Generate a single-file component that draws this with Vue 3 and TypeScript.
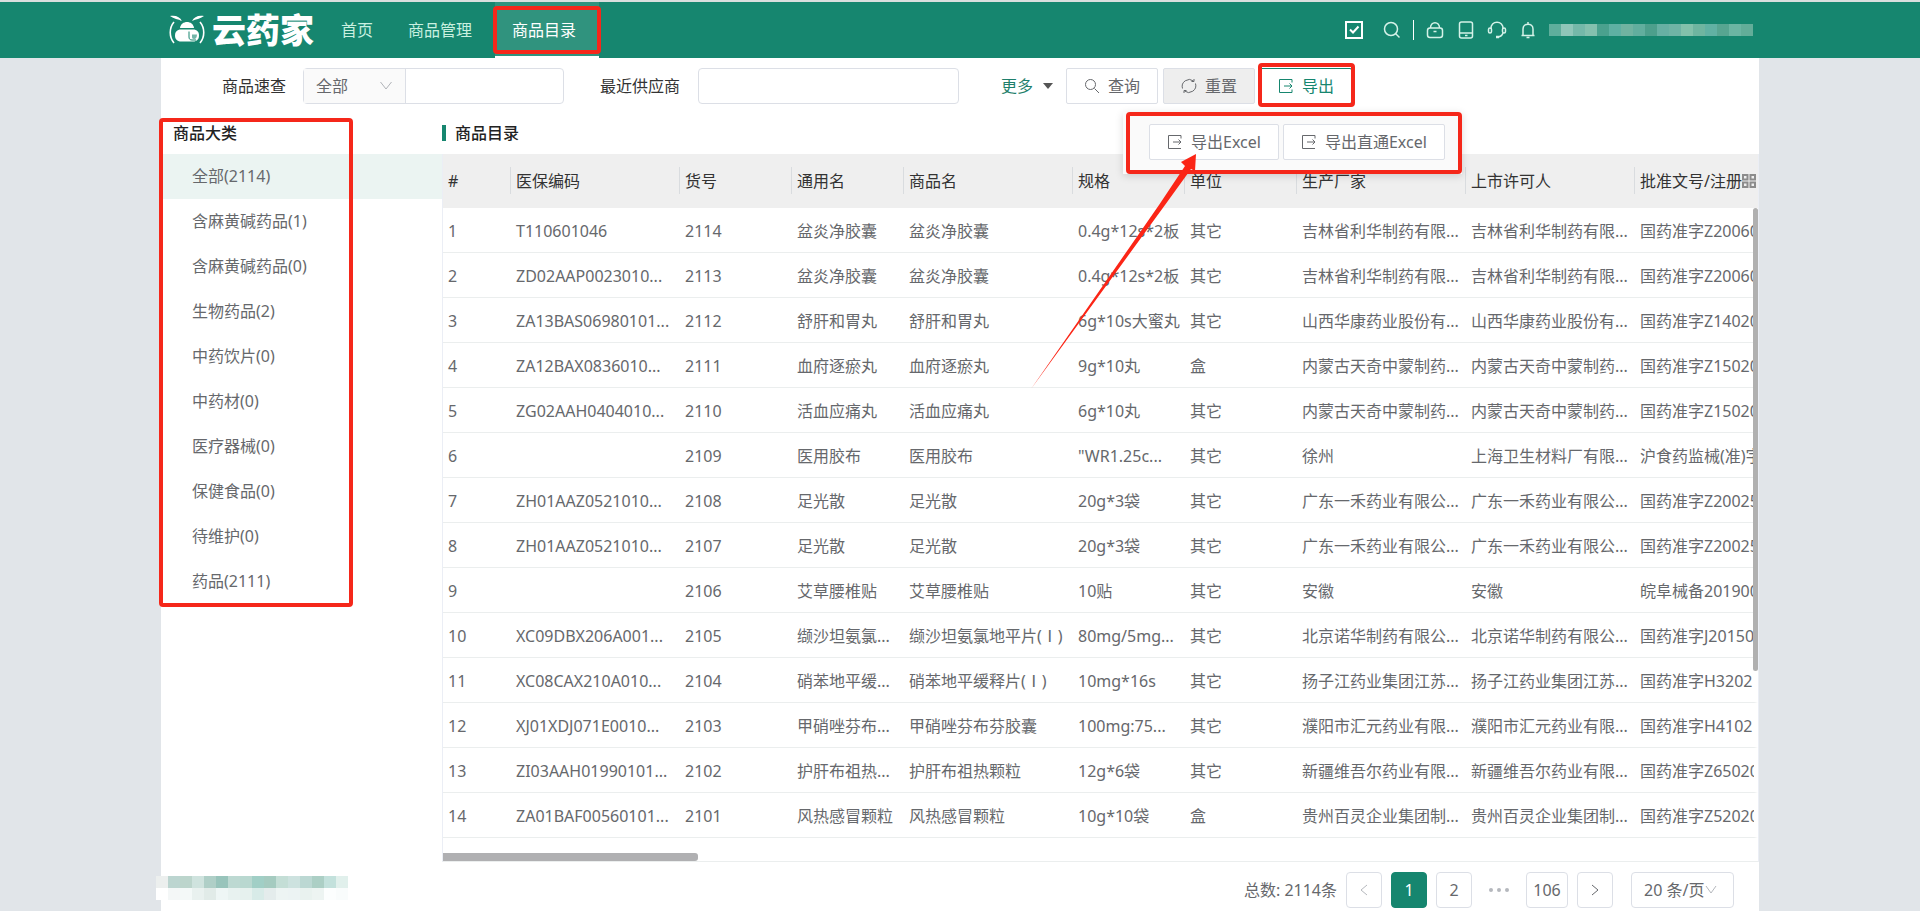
<script setup lang="ts">
import { ref } from 'vue'

interface Row {
  code: string
  no: string
  generic: string
  name: string
  spec: string
  unit: string
  maker: string
  holder: string
  approval: string
}

const r = (
  code: string, no: string, generic: string, name: string, spec: string,
  unit: string, maker: string, holder: string, approval: string
): Row => ({ code, no, generic, name, spec, unit, maker, holder, approval })

const rows: Row[] = [
  r('T110601046', '2114', '盆炎净胶囊', '盆炎净胶囊', '0.4g*12s*2板', '其它', '吉林省利华制药有限...', '吉林省利华制药有限...', '国药准字Z20060'),
  r('ZD02AAP0023010...', '2113', '盆炎净胶囊', '盆炎净胶囊', '0.4g*12s*2板', '其它', '吉林省利华制药有限...', '吉林省利华制药有限...', '国药准字Z20060'),
  r('ZA13BAS06980101...', '2112', '舒肝和胃丸', '舒肝和胃丸', '6g*10s大蜜丸', '其它', '山西华康药业股份有...', '山西华康药业股份有...', '国药准字Z14020'),
  r('ZA12BAX0836010...', '2111', '血府逐瘀丸', '血府逐瘀丸', '9g*10丸', '盒', '内蒙古天奇中蒙制药...', '内蒙古天奇中蒙制药...', '国药准字Z15020'),
  r('ZG02AAH0404010...', '2110', '活血应痛丸', '活血应痛丸', '6g*10丸', '其它', '内蒙古天奇中蒙制药...', '内蒙古天奇中蒙制药...', '国药准字Z15020'),
  r('', '2109', '医用胶布', '医用胶布', '"WR1.25c...', '其它', '徐州', '上海卫生材料厂有限...', '沪食药监械(准)字'),
  r('ZH01AAZ0521010...', '2108', '足光散', '足光散', '20g*3袋', '其它', '广东一禾药业有限公...', '广东一禾药业有限公...', '国药准字Z20025'),
  r('ZH01AAZ0521010...', '2107', '足光散', '足光散', '20g*3袋', '其它', '广东一禾药业有限公...', '广东一禾药业有限公...', '国药准字Z20025'),
  r('', '2106', '艾草腰椎贴', '艾草腰椎贴', '10贴', '其它', '安徽', '安徽', '皖阜械备201900'),
  r('XC09DBX206A001...', '2105', '缬沙坦氨氯...', '缬沙坦氨氯地平片(Ⅰ)', '80mg/5mg...', '其它', '北京诺华制药有限公...', '北京诺华制药有限公...', '国药准字J20150'),
  r('XC08CAX210A010...', '2104', '硝苯地平缓...', '硝苯地平缓释片(Ⅰ)', '10mg*16s', '其它', '扬子江药业集团江苏...', '扬子江药业集团江苏...', '国药准字H3202'),
  r('XJ01XDJ071E0010...', '2103', '甲硝唑芬布...', '甲硝唑芬布芬胶囊', '100mg:75...', '其它', '濮阳市汇元药业有限...', '濮阳市汇元药业有限...', '国药准字H4102'),
  r('ZI03AAH01990101...', '2102', '护肝布祖热...', '护肝布祖热颗粒', '12g*6袋', '其它', '新疆维吾尔药业有限...', '新疆维吾尔药业有限...', '国药准字Z65020'),
  r('ZA01BAF00560101...', '2101', '风热感冒颗粒', '风热感冒颗粒', '10g*10袋', '盒', '贵州百灵企业集团制...', '贵州百灵企业集团制...', '国药准字Z52020'),
]

const categories: string[] = [
  '全部(2114)', '含麻黄碱药品(1)', '含麻黄碱药品(0)', '生物药品(2)', '中药饮片(0)',
  '中药材(0)', '医疗器械(0)', '保健食品(0)', '待维护(0)', '药品(2111)',
]
const activeCategory = ref(0)
const keyword = ref('')
const supplier = ref('')

const userTiles: string[] = [
  '#5fae9c', '#8fc6b9', '#74b8a9', '#84c0ae', '#4aa18e', '#5fb0a3', '#70b3a1', '#62ae9e',
  '#4d9f8c', '#67b0a3', '#6fb4a5', '#83c1ab', '#6fb5a0', '#61b1a3', '#57a591', '#6cb5a3', '#63ad99',
]
const footTop: string[] = [
  '#ecefee', '#bcd5d0', '#bcd5cc', '#cfe3de', '#afcfc7', '#98c4bb', '#bdd9d2', '#b9d8d0',
  '#a1cfc6', '#a5cbc0', '#c4ded6', '#cde2df', '#bcd8d3', '#accfc5', '#c3e1dc', '#e1f0ec',
]
const footBottom: string[] = [
  '#ffffff', '#f4f7f7', '#f4f9f8', '#e9f1ef', '#e1ebe8', '#eef6f5', '#e8f2f0', '#e6f1ee',
  '#d8ebe8', '#e4ecec', '#edf4f3', '#ecf3f3', '#e9f2ef', '#edf4f2', '#fcfefe', '#f9fcfc',
]
</script>

<template>
  <div class="app">
    <header class="topbar">
      <div class="inner">
        <a class="brand" href="#" aria-label="云药家">
          <svg class="mark" width="36" height="30" viewBox="0 0 36 30" fill="none">
            <path d="M1 1C7 0 11 2 13 6C9 4 5 4 1 1ZM35 1C29 0 25 2 23 6C27 4 31 4 35 1Z" fill="#fff" />
            <path d="M5 7C0 13 0 22 5 28M31 7C36 13 36 22 31 28" stroke="#fff" stroke-width="1.600" />
            <path d="M11 13C12 5 24 5 25 13Z" fill="#fff" />
            <path d="M12 14.500H24C28 14.500 30 17 30 20.500C30 24 28 26.500 24 26.500H12C8 26.500 6 24 6 20.500C6 17 8 14.500 12 14.500Z" fill="#fff" />
            <path d="M20 16.500V22C20 24 21 25 23 25H27" stroke="#16866f" stroke-width="1" />
            <path d="M23 19.500H28C28 22 27 24 25 24C23.500 24 23 23 23 22Z" fill="#16866f" opacity=".6" />
          </svg>
          <span class="word">云药家</span>
        </a>
        <nav class="nav">
          <a href="#">首页</a>
          <a href="#">商品管理</a>
          <a href="#" class="active">商品目录<i class="frame"></i></a>
        </nav>
        <div class="tools">
          <button aria-label="待办"><svg width="20" height="20" viewBox="0 0 20 20"><path d="M2 2H18V18H2Z" stroke-width="2" /><path d="M6 9.500L9 12.500L14.500 6.500" stroke-width="2" /></svg></button>
          <button aria-label="搜索"><svg width="20" height="20" viewBox="0 0 20 20"><circle cx="9" cy="9" r="6.500" /><path d="M13.500 13.500L17.500 17.500" /></svg></button>
          <i class="bar"></i>
          <button aria-label="锁定"><svg width="20" height="20" viewBox="0 0 20 20"><rect x="2.500" y="8" width="15" height="9.500" rx="2.500" /><path d="M5.500 8C5.500 1 14.500 1 14.500 8M8.500 11.500H11.500" /></svg></button>
          <button aria-label="手机"><svg width="20" height="20" viewBox="0 0 20 20"><rect x="3.500" y="2" width="13" height="16" rx="2" /><path d="M3.500 13H16.500M9 15.500H11.500" /></svg></button>
          <button aria-label="客服"><svg width="20" height="20" viewBox="0 0 20 20"><path d="M4 9C3 0 17 0 16 9M16 13C15 16 13 17 10 17" /><rect x="1.500" y="8" width="3" height="5" rx="1.500" /><rect x="15.500" y="8" width="3" height="5" rx="1.500" /><path d="M9 17H12" stroke-width="2.500" /></svg></button>
          <button aria-label="通知"><svg width="20" height="20" viewBox="0 0 20 20"><path d="M3.500 15.500H16.500M5 15.500V9C5 2.500 15 2.500 15 9V15.500M10 2V4M8.500 17.500H11.500" /></svg></button>
          <div class="user"><i v-for="(c, i) in userTiles" :key="i" :style="{ background: c }"></i></div>
        </div>
      </div>
    </header>

    <main class="page">
      <form class="filters" @submit.prevent>
        <label class="lab first" for="quick">商品速查</label>
        <div class="combo">
          <div class="pick">
            <select aria-label="速查范围"><option>全部</option></select>
            <svg width="14" height="10" viewBox="0 0 14 10"><path d="M1.500 1L7 8L12.500 1" /></svg>
          </div>
          <input id="quick" v-model="keyword" type="text">
        </div>
        <label class="lab second" for="supplier">最近供应商</label>
        <input id="supplier" v-model="supplier" class="box" type="text">
        <button type="button" class="more">更多<svg width="10" height="6" viewBox="0 0 10 6"><path d="M0 0H10L5 6Z" fill="#555" /></svg></button>
        <button type="submit" class="btn"><svg width="16" height="16" viewBox="0 0 16 16"><circle cx="6.500" cy="6.500" r="5" /><path d="M10.500 10.500L15 15" /></svg>查询</button>
        <button type="reset" class="btn gray"><svg width="16" height="16" viewBox="0 0 16 16"><path d="M1.500 10.500A7 7 0 0 1 12.500 3M14.500 5.500A7 7 0 0 1 3.500 13M10.500 3.500H13V1M5.500 12.500H3V15" /></svg>重置</button>
        <div class="export">
          <button type="button" class="btn green"><svg width="16" height="16" viewBox="0 0 16 16"><path d="M14 4.500V1.500H1.500V14.500H14V11.500M6 8H14M11.500 5.500L14 8L11.500 10.500" /></svg>导出</button>
          <i class="frame"></i>
          <div class="popup">
            <button type="button" class="btn"><svg width="16" height="16" viewBox="0 0 16 16"><path d="M14 4.500V1.500H1.500V14.500H14M6 8H14M11.500 5.500L14 8L11.500 10.500" /></svg>导出Excel</button>
            <button type="button" class="btn"><svg width="16" height="16" viewBox="0 0 16 16"><path d="M14 4.500V1.500H1.500V14.500H14M6 8H14M11.500 5.500L14 8L11.500 10.500" /></svg>导出直通Excel</button>
            <i class="frame"></i>
            <svg class="arrow" width="166" height="236" viewBox="0 0 166 236"><path d="M0 235L128 51L154 12L150 8L165 0L164 17L160 15L134 51Z" fill="#fb2516" /></svg>
          </div>
        </div>
      </form>

      <div class="body">
        <aside class="side">
          <h2>商品大类</h2>
          <ul>
            <li v-for="(c, i) in categories" :key="i" :class="{ on: i === activeCategory }">
              <a href="#" @click.prevent="activeCategory = i">{{ c }}</a>
            </li>
          </ul>
          <i class="frame"></i>
          <div class="mosaic">
            <i v-for="(c, i) in [...footTop, ...footBottom]" :key="i" :style="{ background: c }"></i>
          </div>
        </aside>

        <section class="content">
          <h2>商品目录</h2>
          <div class="grid">
            <table>
              <colgroup>
                <col class="w-no"><col class="w-l"><col class="w-s"><col class="w-s"><col class="w-l">
                <col class="w-s"><col class="w-s"><col class="w-l"><col class="w-l"><col>
              </colgroup>
              <thead>
                <tr>
                  <th>#</th><th>医保编码</th><th>货号</th><th>通用名</th><th>商品名</th>
                  <th>规格</th><th>单位</th><th>生产厂家</th><th>上市许可人</th>
                  <th class="last">
                    <span>批准文号/注册</span>
                    <button aria-label="列设置"><svg width="14" height="14" viewBox="0 0 14 14"><path d="M1 1H5.500V5.500H1ZM8.500 1H13V5.500H8.500ZM1 8.500H5.500V13H1ZM8.500 8.500H13V13H8.500Z" /></svg></button>
                  </th>
                </tr>
              </thead>
              <tbody>
                <tr v-for="(row, i) in rows" :key="row.no">
                  <td>{{ i + 1 }}</td><td>{{ row.code }}</td><td>{{ row.no }}</td>
                  <td>{{ row.generic }}</td><td>{{ row.name }}</td><td>{{ row.spec }}</td>
                  <td>{{ row.unit }}</td><td>{{ row.maker }}</td><td>{{ row.holder }}</td>
                  <td>{{ row.approval }}</td>
                </tr>
              </tbody>
            </table>
            <i class="vbar"></i>
            <div class="track"><i class="hbar"></i></div>
          </div>
          <div class="pager">
            <span>总数: 2114条</span>
            <button class="pg" disabled aria-label="上一页"><svg width="8" height="12" viewBox="0 0 8 12"><path d="M7 1L1 6L7 11" /></svg></button>
            <button class="pg cur">1</button>
            <button class="pg">2</button>
            <span class="dots"><i></i><i></i><i></i></span>
            <button class="pg wide">106</button>
            <button class="pg" aria-label="下一页"><svg width="8" height="12" viewBox="0 0 8 12"><path d="M1 1L7 6L1 11" /></svg></button>
            <div class="size">
              <select aria-label="每页条数"><option>20 条/页</option></select>
              <svg width="12" height="10" viewBox="0 0 12 10"><path d="M1 1L6 8L11 1" /></svg>
            </div>
          </div>
        </section>
      </div>
    </main>
  </div>
</template>

<style>
body {
  margin: 0;
  background: #e1e5e9;
}
</style>

<style scoped>
.app {
  display: flex;
  flex-direction: column;
  min-height: 100vh;
  overflow-x: hidden;
  font: 16px/24px "Noto Sans", "Noto Sans CJK SC", sans-serif;
  color: #66686c;
}
.app * { box-sizing: border-box; }
button, input, select {
  margin: 0;
  padding: 0;
  border: 0;
  font: inherit;
  color: inherit;
  background: none;
}
select { appearance: none; }
a { color: inherit; text-decoration: none; }
svg { flex: none; fill: none; stroke: currentColor; }
h2 {
  margin: 0;
  font-size: 16px;
  line-height: 24px;
  font-weight: 500;
  color: #222;
}
.frame {
  position: absolute;
  border: 4px solid #f5271a;
  border-radius: 4px;
  pointer-events: none;
}

.topbar {
  border-top: 2px solid #d9dfde;
  background: #16866f;
  color: #c9f0e0;
}
.inner {
  display: flex;
  width: 100%;
  max-width: 1598px;
  height: 56px;
  margin: 0 auto;
}
.brand {
  display: flex;
  align-items: center;
  gap: 7px;
  width: 163px;
  padding-left: 8px;
  color: #fff;
}
.mark { stroke: none; }
.word {
  font-size: 34px;
  line-height: 50px;
  font-weight: 900;
}
.nav { display: flex; }
.nav a {
  position: relative;
  padding: 16px 18px 0 17px;
}
.nav .active {
  margin-left: 5px;
  padding-right: 23px;
  border-bottom: 2px solid #fff;
  background: #30937e;
  color: #fff;
}
.nav .frame { inset: 4px -2px 2px; }
.tools {
  display: flex;
  align-items: center;
  gap: 11px;
  margin-left: auto;
  padding-right: 6px;
}
.tools button { display: flex; color: #d5f2e8; }
.tools svg { stroke-width: 1.5; }
.tools button:first-child { margin-right: 7px; color: #fff; }
.bar { width: 1px; height: 20px; background: #fff; }
.user {
  display: flex;
  height: 12px;
}
.user i { width: 12px; height: 12px; }

.page {
  display: flex;
  flex: 1;
  flex-direction: column;
  width: 100%;
  max-width: 1598px;
  margin: 0 auto;
  background: #fff;
}
.filters {
  display: flex;
  align-items: center;
  height: 56px;
}
.lab { color: #333; white-space: nowrap; }
.first { margin: 0 17px 0 61px; }
.second { margin: 0 18px 0 36px; }
.combo {
  display: flex;
  width: 261px;
  height: 36px;
  border: 1px solid #dcdfe6;
  border-radius: 4px;
}
.combo input { flex: 1; min-width: 0; }
.pick {
  display: flex;
  align-items: center;
  width: 102px;
  padding: 0 12px;
  border-right: 1px solid #dcdfe6;
  background: #fafafa;
}
.pick select { flex: 1; }
.pick svg { stroke: #b0b3b8; }
.box {
  width: 261px;
  height: 36px;
  border: 1px solid #dcdfe6;
  border-radius: 4px;
}
.more {
  display: flex;
  align-items: center;
  gap: 10px;
  margin: 0 13px 0 42px;
  color: #1f7f6c;
}
.more svg { stroke: none; }
.btn {
  display: flex;
  align-items: center;
  gap: 8px;
  height: 36px;
  padding: 0 17px;
  border: 1px solid #dcdfe6;
  border-radius: 2px;
  background: #fff;
  white-space: nowrap;
}
.btn.gray { margin-left: 5px; background: #eee; }
.btn.green { color: #16866f; border-color: #16866f; }
.export { position: relative; margin-left: 5px; }
.export > .frame { inset: -5px -3px -3px -2px; }
.popup {
  position: absolute;
  z-index: 5;
  top: 44px;
  left: -137px;
  display: flex;
  gap: 4px;
  padding: 12px 17px 14px 26px;
  background: #fafafa;
  box-shadow: 0 2px 8px rgba(0, 0, 0, .15);
}
.popup > .frame { inset: 0 0 0 3px; }
.arrow {
  position: absolute;
  top: 42px;
  left: -93px;
  left: -92px;
  stroke: none;
}

.body { display: flex; flex: 1; }
.side {
  position: relative;
  width: 281px;
  padding-top: 7px;
}
.side h2 {
  padding-left: 12px;
  margin-bottom: 9px;
}
.side ul { margin: 0; padding: 0; list-style: none; }
.side li a {
  display: block;
  height: 45px;
  padding: 10px 31px;
}
.side .on { background: #ebf4f2; }
.side > .frame { top: 4px; left: -2px; width: 194px; height: 489px; }
.mosaic {
  position: absolute;
  top: 762px;
  left: -5px;
  display: grid;
  grid-template-columns: repeat(16, 12px);
}
.mosaic i { height: 12px; }

.content { flex: 1; min-width: 0; padding-top: 7px; }
.content h2 {
  display: flex;
  align-items: center;
  gap: 9px;
  margin-bottom: 9px;
}
.content h2::before {
  width: 4px;
  height: 16px;
  background: #16866f;
  content: "";
}
.grid {
  position: relative;
  border-left: 1px solid #ebeef5;
  border-right: 1px solid #ebeef5;
  border-bottom: 1px solid #ebeeee;
}
table {
  width: 100%;
  table-layout: fixed;
  border-spacing: 0;
}
.w-no { width: 67px; }
.w-l { width: 169px; }
.w-s { width: 112px; }
th {
  position: relative;
  height: 54px;
  padding: 0 0 0 6px;
  overflow: hidden;
  background: #efefef;
  color: #333;
  font-weight: 400;
  text-align: left;
  white-space: nowrap;
}
th + th::before {
  position: absolute;
  top: 13px;
  left: 0;
  width: 1px;
  height: 27px;
  background: #d9dcdf;
  content: "";
}
.last button {
  position: absolute;
  top: 20px;
  right: 2px;
  display: flex;
  color: #8c8c8c;
  background: #efefef;
}
.last svg { stroke-width: 2; }
td {
  height: 45px;
  padding: 2px 0 0 6px;
  border-bottom: 1px solid #ebeeee;
  overflow: hidden;
  white-space: nowrap;
}
th:first-child, td:first-child { padding-left: 5px; }
td:last-child { border-right: 4px solid #fff; }
.vbar {
  position: absolute;
  top: 54px;
  right: 0;
  width: 5px;
  height: 463px;
  border-radius: 3px;
  background: #b0b0b0;
}
.track { padding-top: 15px; }
.hbar {
  display: block;
  width: 255px;
  height: 8px;
  border-radius: 0 3px 3px 0;
  background: #b0b0b2;
}
.pager {
  display: flex;
  align-items: center;
  justify-content: flex-end;
  gap: 9px;
  padding: 10px 25px 3px 0;
}
.pg {
  display: flex;
  align-items: center;
  justify-content: center;
  width: 36px;
  height: 36px;
  border: 1px solid #dcdfe6;
  border-radius: 4px;
}
.pg:disabled { color: #b5b8bd; }
.pg.cur { border-color: #16866f; background: #16866f; color: #fff; }
.pg.wide { width: 42px; }
.dots { display: flex; justify-content: center; gap: 4px; width: 36px; }
.dots i { width: 4px; height: 4px; border-radius: 2px; background: #b5b8bd; }
.size {
  display: flex;
  align-items: center;
  width: 103px;
  height: 36px;
  margin-left: 9px;
  padding: 0 12px;
  border: 1px solid #dcdfe6;
  border-radius: 4px;
}
.size svg { stroke: #b5b8bd; }
</style>
